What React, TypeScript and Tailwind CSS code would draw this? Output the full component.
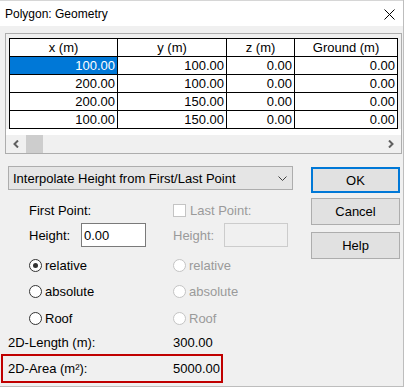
import React from 'react';

const headers = ['x (m)', 'y (m)', 'z (m)', 'Ground (m)'];
const colW = ['w-[108px]', 'w-[109px]', 'w-[68px]', 'w-[103px]'];
const rows = [
  ['100.00', '100.00', '0.00', '0.00'],
  ['200.00', '100.00', '0.00', '0.00'],
  ['200.00', '150.00', '0.00', '0.00'],
  ['100.00', '150.00', '0.00', '0.00'],
];

function Radio({ label, checked, disabled }: { label: string; checked?: boolean; disabled?: boolean }) {
  return (
    <div className="flex items-center gap-[3px]">
      <div
        className={`w-[13px] h-[13px] rounded-full border bg-white flex items-center justify-center ${
          disabled ? 'border-[#c4c4c4]' : 'border-[#333333]'
        }`}
      >
        {checked && <div className="w-[5px] h-[5px] rounded-full bg-[#333333]" />}
      </div>
      <span className={disabled ? 'text-[#9a9a9a]' : 'text-black'}>{label}</span>
    </div>
  );
}

function Button({ label, primary, className = '' }: { label: string; primary?: boolean; className?: string }) {
  return (
    <div
      className={`w-[89px] flex items-center justify-center bg-[#e1e1e1] ${
        primary ? 'border-2 border-[#0078d7]' : 'border border-[#adadad]'
      } ${className}`}
    >
      {label}
    </div>
  );
}

export default function App() {
  return (
    <div
      className="w-[405px] h-[388px] bg-white text-[13px] leading-none text-black"
      style={{ fontFamily: '"Liberation Sans", Arial, sans-serif' }}
    >
      <div className="w-[404px] h-[387px] flex flex-col border-r border-b border-[#bdbdbd]">
        {/* Title bar */}
        <div className="h-[26px] bg-white border-t border-[#d6d6d6] flex items-center justify-between pl-[5px] pr-[8px]">
          <span className="text-[12px]">Polygon: Geometry</span>
          <svg width="11" height="11" viewBox="0 0 11 11" className="mt-[1px]">
            <path d="M0.5 0.5 L10.5 10.5 M10.5 0.5 L0.5 10.5" stroke="#000" strokeWidth="1" />
          </svg>
        </div>

        {/* Body */}
        <div className="flex-1 bg-[#f0f0f0]">
          {/* Point grid */}
          <div className="ml-[5px] mt-[7px] w-[397px] h-[121px] border border-[#adadad] flex flex-col">
            <div className="pt-[4px] pl-[3px]">
              <div className="inline-flex flex-col border-l border-t border-black bg-white">
                <div className="flex">
                  {headers.map((h, i) => (
                    <div
                      key={h}
                      className={`${colW[i]} h-[18px] border-r border-b border-black flex items-center justify-center`}
                    >
                      {h}
                    </div>
                  ))}
                </div>
                {rows.map((r, ri) => (
                  <div key={ri} className="flex">
                    {r.map((v, ci) => (
                      <div
                        key={ci}
                        className={`${colW[ci]} h-[18px] border-r border-b border-black flex items-center justify-end pr-[2px] ${
                          ri === 0 && ci === 0 ? 'bg-[#0078d7] text-white' : ''
                        }`}
                      >
                        {v}
                      </div>
                    ))}
                  </div>
                ))}
              </div>
            </div>
            <div className="h-[6px] bg-white" />
            <div className="h-[18px] flex items-center justify-between">
              <div className="flex items-center h-full">
                <div className="w-[20px] flex items-center justify-center">
                  <svg width="6" height="8" viewBox="0 0 6 8">
                    <path d="M5 0.5 L1.5 4 L5 7.5" fill="none" stroke="#606060" strokeWidth="2" />
                  </svg>
                </div>
                <div className="w-[17px] h-full bg-[#cdcdcd]" />
              </div>
              <div className="w-[20px] flex items-center justify-center">
                <svg width="6" height="8" viewBox="0 0 6 8">
                  <path d="M1 0.5 L4.5 4 L1 7.5" fill="none" stroke="#606060" strokeWidth="2" />
                </svg>
              </div>
            </div>
          </div>

          {/* Lower section */}
          <div className="flex mt-[12px] gap-[18px]">
            <div className="ml-[8px] w-[285px] flex flex-col">
              <div className="h-[24px] border border-[#adadad] bg-[#e5e5e5] flex items-center justify-between pl-[4px] pr-[5px]">
                <span>Interpolate Height from First/Last Point</span>
                <svg width="9" height="5" viewBox="0 0 9 5">
                  <path d="M0.5 0.5 L4.5 4.5 L8.5 0.5" fill="none" stroke="#404040" strokeWidth="1" />
                </svg>
              </div>

              <div className="pl-[21px] grid grid-cols-[144px_1fr]">
                <div className="mt-[11px] h-[18px] flex items-center">First Point:</div>
                <div className="mt-[11px] h-[18px] flex items-center gap-[4px]">
                  <div className="w-[13px] h-[13px] border border-[#c4c4c4] bg-white" />
                  <span className="text-[#9a9a9a]">Last Point:</span>
                </div>

                <div className="mt-[4px] h-[24px] flex items-center">
                  <span className="w-[52px]">Height:</span>
                  <div className="w-[65px] h-[24px] border border-[#7a7a7a] bg-white flex items-center pl-[2px]">0.00</div>
                </div>
                <div className="mt-[4px] h-[24px] flex items-center">
                  <span className="w-[51px] text-[#9a9a9a]">Height:</span>
                  <div className="w-[64px] h-[24px] border border-[#cccccc] bg-[#f0f0f0]" />
                </div>

                <div className="mt-[5px] h-[26px] flex items-center">
                  <Radio label="relative" checked />
                </div>
                <div className="mt-[5px] h-[26px] flex items-center">
                  <Radio label="relative" disabled />
                </div>
                <div className="h-[27px] flex items-center">
                  <Radio label="absolute" />
                </div>
                <div className="h-[27px] flex items-center">
                  <Radio label="absolute" disabled />
                </div>
                <div className="h-[26px] flex items-center">
                  <Radio label="Roof" />
                </div>
                <div className="h-[26px] flex items-center">
                  <Radio label="Roof" disabled />
                </div>
              </div>

              <div className="h-[23px] flex items-center">
                <span className="w-[165px]">2D-Length (m):</span>
                <span>300.00</span>
              </div>
              <div className="-ml-[7px] w-[222px] h-[29px] border-2 border-[#c00000] pl-[5px] flex items-center">
                <span className="w-[165px]">2D-Area (m²):</span>
                <span>5000.00</span>
              </div>
            </div>

            <div className="flex flex-col mt-[1px]">
              <Button label="OK" primary className="h-[26px]" />
              <Button label="Cancel" className="h-[27px] mt-[5px]" />
              <Button label="Help" className="h-[27px] mt-[7px]" />
            </div>
          </div>
        </div>
      </div>
    </div>
  );
}
